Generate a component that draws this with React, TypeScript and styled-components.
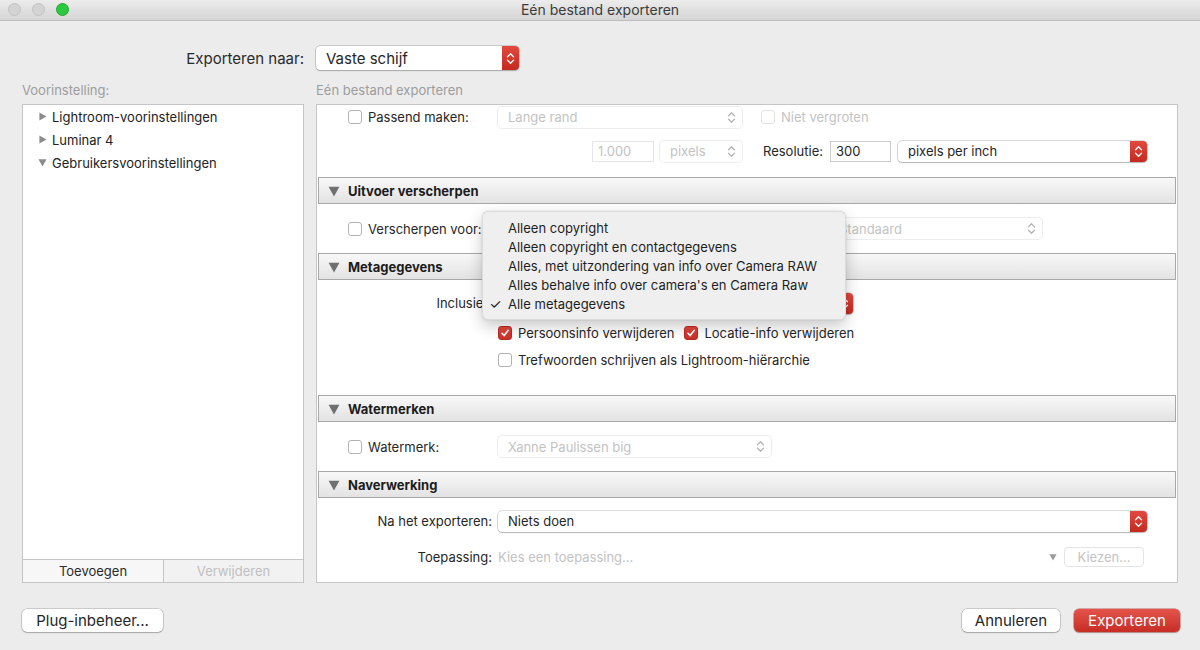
import React from "react";
import styled, { createGlobalStyle } from "styled-components";

const GlobalStyle = createGlobalStyle`
  html, body { margin: 0; padding: 0; }
  body {
    background: #ececec;
    font-family: Inter, "Liberation Sans", sans-serif;
    font-size: 13px;
    color: #262626;
    -webkit-font-smoothing: antialiased;
  }
  * { box-sizing: border-box; }
`;

const Window = styled.div`
  width: 1200px;
  height: 650px;
  display: flex;
  flex-direction: column;
  background: #ececec;
  overflow: hidden;
`;

const TitleBar = styled.div`
  height: 21px;
  flex: none;
  display: grid;
  grid-template-columns: 90px 1fr 90px;
  align-items: center;
  background: linear-gradient(#ececec, #d5d5d5);
  border-bottom: 1px solid #bdbdbd;
`;

const Lights = styled.div`
  display: flex;
  gap: 11px;
  padding-left: 8px;
  margin-top: -2px;
`;

const Light = styled.span<{ $color: string; $edge: string }>`
  width: 13px;
  height: 13px;
  border-radius: 50%;
  background: ${(p) => p.$color};
  border: 1px solid ${(p) => p.$edge};
`;

const Title = styled.div`
  text-align: center;
  font-size: 14px;
  color: #3b3b3b;
  margin-top: -1px;
`;

const Body = styled.div`
  flex: 1;
  display: flex;
  flex-direction: column;
  padding: 25px 22px 18px 22px;
`;

const TopRow = styled.div`
  height: 24px;
  display: grid;
  grid-template-columns: 282px 203px;
  column-gap: 12px;
  align-items: center;
  font-size: 15px;
`;

const TopLabel = styled.div`
  text-align: right;
  color: #2a2a2a;
`;

const Main = styled.div`
  height: 501px;
  margin-top: 12px;
  display: grid;
  grid-template-columns: 282px 862px;
  column-gap: 12px;
`;

const Column = styled.div`
  display: flex;
  flex-direction: column;
  min-height: 0;
`;

const Caption = styled.div`
  height: 16px;
  margin-bottom: 6px;
  line-height: 16px;
  color: #9d9d9d;
`;

const PresetBox = styled.div`
  flex: 1;
  display: flex;
  flex-direction: column;
  background: #fff;
  border: 1px solid #c5c5c5;
`;

const Tree = styled.div`
  flex: 1;
`;

const TreeItem = styled.div`
  height: 23px;
  display: flex;
  align-items: center;
  gap: 5px;
  padding-left: 15px;
  color: #222;
`;

const PresetActions = styled.div`
  height: 23px;
  display: grid;
  grid-template-columns: 141px 1fr;
  border-top: 1px solid #c5c5c5;
`;

const PresetAction = styled.div<{ $off?: boolean }>`
  display: flex;
  align-items: center;
  justify-content: center;
  background: ${(p) => (p.$off ? "#f2f2f2" : "#f7f7f7")};
  color: ${(p) => (p.$off ? "#c0c0c0" : "#2a2a2a")};
  border-right: ${(p) => (p.$off ? "none" : "1px solid #c5c5c5")};
`;

const Panel = styled.div`
  position: relative;
  flex: 1;
  background: #fff;
  border: 1px solid #c5c5c5;
  overflow: hidden;
`;

const Section = styled.div<{ $pt?: number; $pb?: number }>`
  padding: ${(p) => p.$pt ?? 0}px 0 ${(p) => p.$pb ?? 0}px;
`;

const Header = styled.div`
  height: 27px;
  margin: 0 1px;
  display: flex;
  align-items: center;
  gap: 8px;
  padding-left: 9px;
  border: 1px solid #a8a8a8;
  background: linear-gradient(#f8f8f8, #e3e3e3);
  font-weight: 700;
  color: #1c1c1c;
`;

const Row = styled.div<{ $h: number }>`
  height: ${(p) => p.$h}px;
  display: flex;
  align-items: center;
`;

const LabelCell = styled.div<{ $end?: boolean }>`
  width: 175px;
  flex: none;
  margin-right: 6px;
  display: flex;
  align-items: center;
  gap: 6px;
  justify-content: ${(p) => (p.$end ? "flex-end" : "flex-start")};
  padding-left: ${(p) => (p.$end ? 0 : 31)}px;
  white-space: nowrap;
`;

const Text = styled.span<{ $off?: boolean }>`
  color: ${(p) => (p.$off ? "#c3c3c3" : "#262626")};
  white-space: nowrap;
`;

const Cluster = styled.div<{ $gap?: number; $ml?: number | "auto" }>`
  display: flex;
  align-items: center;
  gap: ${(p) => p.$gap ?? 6}px;
  margin-left: ${(p) => (p.$ml === "auto" ? "auto" : `${p.$ml ?? 0}px`)};
`;

const SelectBox = styled.div<{ $w: number; $h?: number; $off?: boolean }>`
  width: ${(p) => p.$w}px;
  height: ${(p) => p.$h ?? 21}px;
  flex: none;
  display: flex;
  align-items: center;
  padding-left: 10px;
  background: #fff;
  border-radius: 4px;
  color: ${(p) => (p.$off ? "#c3c3c3" : "#262626")};
  box-shadow: ${(p) =>
    p.$off
      ? "0 0 0 1px #ededed"
      : "0 0 0 0.5px rgba(0,0,0,0.28), 0 1px 1.5px rgba(0,0,0,0.18)"};
  white-space: nowrap;
`;

const Stepper = styled.span<{ $red?: boolean }>`
  margin-left: auto;
  width: ${(p) => (p.$red ? 17 : 22)}px;
  height: 100%;
  flex: none;
  display: flex;
  align-items: center;
  justify-content: center;
  border-radius: 0 4px 4px 0;
  background: ${(p) => (p.$red ? "linear-gradient(#e4493f, #c4291f)" : "transparent")};
  color: ${(p) => (p.$red ? "#fff" : "#b5b5b5")};
`;

const Field = styled.div<{ $w: number; $off?: boolean }>`
  width: ${(p) => p.$w}px;
  height: 21px;
  flex: none;
  display: flex;
  align-items: center;
  padding-left: 5px;
  background: #fff;
  border: 1px solid ${(p) => (p.$off ? "#e6e6e6" : "#cbcbcb")};
  color: ${(p) => (p.$off ? "#c3c3c3" : "#262626")};
`;

const Check = styled.span<{ $on?: boolean; $off?: boolean }>`
  width: 14px;
  height: 14px;
  flex: none;
  border-radius: 3px;
  display: inline-flex;
  align-items: center;
  justify-content: center;
  background: ${(p) => (p.$on ? "linear-gradient(#e2473d, #c92f27)" : "#fff")};
  border: 1px solid ${(p) => (p.$on ? "#b92a22" : p.$off ? "#e2e2e2" : "#b3b3b3")};
`;

const Menu = styled.div`
  position: absolute;
  left: 165px;
  top: 106px;
  width: 364px;
  padding: 6px 0;
  background: #efefef;
  border-radius: 6px;
  border: 1px solid rgba(0, 0, 0, 0.08);
  box-shadow: 0 6px 16px rgba(0, 0, 0, 0.22), 0 0 2px rgba(0, 0, 0, 0.12);
  z-index: 2;
`;

const MenuItem = styled.div`
  height: 19px;
  display: flex;
  align-items: center;
  color: #1e1e1e;
  white-space: nowrap;
`;

const Mark = styled.span`
  width: 25px;
  text-align: center;
  font-size: 14px;
`;

const Picker = styled.div`
  flex: 1;
  display: flex;
  align-items: center;
  padding-right: 33px;
`;

const SmallButton = styled.div`
  width: 80px;
  height: 20px;
  margin-left: 7px;
  display: flex;
  align-items: center;
  justify-content: center;
  border-radius: 4px;
  border: 1px solid #e4e4e4;
  color: #c3c3c3;
  background: #fff;
`;

const Footer = styled.div`
  height: 24px;
  margin-top: 25px;
  margin-right: -2px;
  display: flex;
  align-items: center;
  justify-content: space-between;
`;

const Button = styled.button<{ $w: number; $primary?: boolean }>`
  width: ${(p) => p.$w}px;
  height: 23px;
  padding: 0;
  border: none;
  border-radius: 5px;
  font-family: inherit;
  font-size: 15px;
  color: ${(p) => (p.$primary ? "#fff" : "#262626")};
  background: ${(p) => (p.$primary ? "linear-gradient(#e4544a, #c62d25)" : "#fff")};
  box-shadow: ${(p) =>
    p.$primary
      ? "0 0 0 0.5px rgba(150,20,10,0.6), 0 1px 1.5px rgba(0,0,0,0.2)"
      : "0 0 0 0.5px rgba(0,0,0,0.28), 0 1px 1.5px rgba(0,0,0,0.18)"};
`;

const Chevrons = () => (
  <svg width="9" height="13" viewBox="0 0 9 13" fill="none">
    <path d="M1.5 4.8 L4.5 1.8 L7.5 4.8 M1.5 8.2 L4.5 11.2 L7.5 8.2" stroke="currentColor" strokeWidth="1.3" strokeLinecap="round" strokeLinejoin="round" />
  </svg>
);

const Tick = () => (
  <svg width="10" height="10" viewBox="0 0 10 10" fill="none">
    <path d="M2 5.3 L4.2 7.6 L8.2 2.3" stroke="#fff" strokeWidth="1.6" strokeLinecap="round" strokeLinejoin="round" />
  </svg>
);

const Disclosure = ({ open, size = 8, color = "#8c8c8c" }: { open?: boolean; size?: number; color?: string }) => (
  <svg width={size + 1} height={size + 1} viewBox="0 0 10 10">
    {open ? <path d="M0.5 1.5 H9.5 L5 9.5 Z" fill={color} /> : <path d="M1.5 0.5 V9.5 L9.5 5 Z" fill={color} />}
  </svg>
);

type SelectProps = { w: number; value: string; off?: boolean; red?: boolean; h?: number };

const Select = ({ w, value, off, red, h }: SelectProps) => (
  <SelectBox $w={w} $h={h} $off={off}>
    {value}
    <Stepper $red={red}>
      <Chevrons />
    </Stepper>
  </SelectBox>
);

const menuItems = [
  "Alleen copyright",
  "Alleen copyright en contactgegevens",
  "Alles, met uitzondering van info over Camera RAW",
  "Alles behalve info over camera's en Camera Raw",
  "Alle metagegevens",
];

const App = () => {
  return (
    <Window>
      <GlobalStyle />
      <TitleBar>
        <Lights>
          <Light $color="#d3d3d3" $edge="#c2c2c2" />
          <Light $color="#d3d3d3" $edge="#c2c2c2" />
          <Light $color="#2bc840" $edge="#22a834" />
        </Lights>
        <Title>Eén bestand exporteren</Title>
        <div />
      </TitleBar>

      <Body>
        <TopRow>
          <TopLabel>Exporteren naar:</TopLabel>
          <Select w={203} h={24} value="Vaste schijf" red />
        </TopRow>

        <Main>
          <Column>
            <Caption>Voorinstelling:</Caption>
            <PresetBox>
              <Tree>
                <TreeItem>
                  <Disclosure />
                  Lightroom-voorinstellingen
                </TreeItem>
                <TreeItem>
                  <Disclosure />
                  Luminar 4
                </TreeItem>
                <TreeItem>
                  <Disclosure open />
                  Gebruikersvoorinstellingen
                </TreeItem>
              </Tree>
              <PresetActions>
                <PresetAction>Toevoegen</PresetAction>
                <PresetAction $off>Verwijderen</PresetAction>
              </PresetActions>
            </PresetBox>
          </Column>

          <Column>
            <Caption>Eén bestand exporteren</Caption>
            <Panel>
              <Section $pb={4}>
                <Row $h={24}>
                  <LabelCell>
                    <Check />
                    <Text>Passend maken:</Text>
                  </LabelCell>
                  <Select w={244} value="Lange rand" off />
                  <Cluster $ml={19}>
                    <Check $off />
                    <Text $off>Niet vergroten</Text>
                  </Cluster>
                </Row>
                <Row $h={44}>
                  <LabelCell />
                  <Cluster $ml={94}>
                    <Field $w={62} $off>1.000</Field>
                    <Select w={82} value="pixels" off />
                  </Cluster>
                  <Cluster $ml={21} $gap={7}>
                    <Text>Resolutie:</Text>
                    <Field $w={61}>300</Field>
                    <Select w={249} value="pixels per inch" red />
                  </Cluster>
                </Row>
              </Section>

              <Header>
                <Disclosure open size={11} color="#707070" />
                Uitvoer verscherpen
              </Header>
              <Section>
                <Row $h={49}>
                  <LabelCell>
                    <Check />
                    <Text>Verscherpen voor:</Text>
                  </LabelCell>
                  <Cluster $ml={331}>
                    <Select w={213} value="Standaard" off />
                  </Cluster>
                </Row>
              </Section>

              <Header>
                <Disclosure open size={11} color="#707070" />
                Metagegevens
              </Header>
              <Section $pt={11} $pb={26}>
                <Row $h={24}>
                  <LabelCell $end>
                    <Text>Inclusief:</Text>
                  </LabelCell>
                  <Select w={355} value="Alle metagegevens" red />
                </Row>
                <Row $h={36}>
                  <LabelCell />
                  <Cluster>
                    <Check $on>
                      <Tick />
                    </Check>
                    <Text>Persoonsinfo verwijderen</Text>
                  </Cluster>
                  <Cluster $ml={10}>
                    <Check $on>
                      <Tick />
                    </Check>
                    <Text>Locatie-info verwijderen</Text>
                  </Cluster>
                </Row>
                <Row $h={18}>
                  <LabelCell />
                  <Cluster>
                    <Check />
                    <Text>Trefwoorden schrijven als Lightroom-hiërarchie</Text>
                  </Cluster>
                </Row>
              </Section>

              <Header>
                <Disclosure open size={11} color="#707070" />
                Watermerken
              </Header>
              <Section>
                <Row $h={49}>
                  <LabelCell>
                    <Check />
                    <Text>Watermerk:</Text>
                  </LabelCell>
                  <Select w={273} value="Xanne Paulissen big" off />
                </Row>
              </Section>

              <Header>
                <Disclosure open size={11} color="#707070" />
                Naverwerking
              </Header>
              <Section $pt={11}>
                <Row $h={24}>
                  <LabelCell $end>
                    <Text>Na het exporteren:</Text>
                  </LabelCell>
                  <Select w={649} value="Niets doen" red />
                </Row>
                <Row $h={48}>
                  <LabelCell $end>
                    <Text>Toepassing:</Text>
                  </LabelCell>
                  <Picker>
                    <Text $off>Kies een toepassing...</Text>
                    <Cluster $ml="auto">
                      <Disclosure open size={7} color="#9a9a9a" />
                    </Cluster>
                    <SmallButton>Kiezen...</SmallButton>
                  </Picker>
                </Row>
              </Section>

              <Menu>
                {menuItems.map((item, i) => (
                  <MenuItem key={item}>
                    <Mark>{i === menuItems.length - 1 ? "✓" : ""}</Mark>
                    {item}
                  </MenuItem>
                ))}
              </Menu>
            </Panel>
          </Column>
        </Main>

        <Footer>
          <Button $w={141}>Plug-inbeheer...</Button>
          <Cluster $gap={14}>
            <Button $w={98}>Annuleren</Button>
            <Button $w={106} $primary>
              Exporteren
            </Button>
          </Cluster>
        </Footer>
      </Body>
    </Window>
  );
};

export default App;
